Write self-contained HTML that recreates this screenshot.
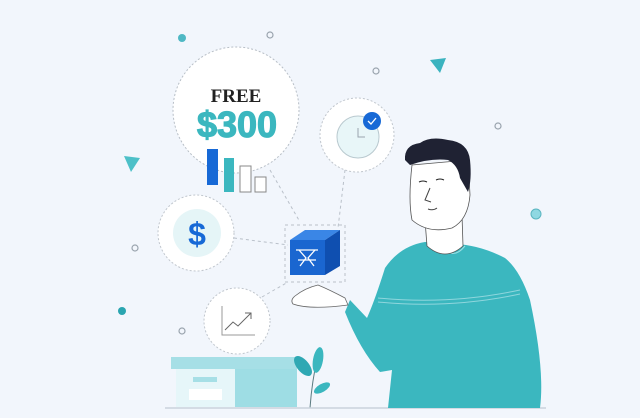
<!DOCTYPE html>
<html><head><meta charset="utf-8"><style>
html,body{margin:0;padding:0;background:#f2f6fc;}
svg{display:block}
</style></head><body>
<svg width="640" height="418" viewBox="0 0 640 418" xmlns="http://www.w3.org/2000/svg">
<rect width="640" height="418" fill="#f2f6fc"/>
<g stroke="#b9c0c9" stroke-width="1" stroke-dasharray="3 3" fill="none">
<path d="M270 170 L300 222"/>
<path d="M234 238 L288 245"/>
<path d="M345 170 L338 228"/>
<path d="M285 225 H345 V282 H285 Z"/>
<path d="M262 297 L288 282"/>
</g>
<g fill="none" stroke="#9aa4ae" stroke-width="1.2">
<circle cx="270" cy="35" r="3"/><circle cx="376" cy="71" r="3"/><circle cx="498" cy="126" r="3"/>
<circle cx="135" cy="248" r="3"/><circle cx="182" cy="331" r="3"/>
</g>
<circle cx="182" cy="38" r="4" fill="#4fb8c4"/>
<circle cx="536" cy="214" r="5" fill="#8fd8e2" stroke="#5ab5c0"/>
<circle cx="122" cy="311" r="4" fill="#2aa5b0"/>
<path d="M124 156 L140 158 L131 172 Z" fill="#4dc0c8"/>
<path d="M430 60 L446 58 L440 73 Z" fill="#3bb3bf"/>
<circle cx="236" cy="110" r="63" fill="#fff" stroke="#b7bec6" stroke-dasharray="2 2"/>
<text x="236" y="102" font-family="Liberation Serif,serif" font-weight="bold" font-size="19" fill="#222" text-anchor="middle">FREE</text>
<text x="237" y="137" font-family="Liberation Sans,sans-serif" font-weight="bold" font-size="36" fill="#3bb7bf" stroke="#3bb7bf" stroke-width="1.2" text-anchor="middle">$300</text>
<rect x="207" y="149" width="11" height="36" fill="#1769d6"/>
<rect x="224" y="158" width="10" height="34" fill="#3bb7bf"/>
<rect x="240" y="166" width="11" height="26" fill="#fff" stroke="#888"/>
<rect x="255" y="177" width="11" height="15" fill="#fff" stroke="#888"/>
<circle cx="357" cy="135" r="37" fill="#fff" stroke="#c0c6cd" stroke-dasharray="2 2"/>
<circle cx="358" cy="137" r="21" fill="#e8f6f8" stroke="#b9c9cf"/>
<path d="M358 128 V137 H365" stroke="#9aa4ae" fill="none"/>
<circle cx="372" cy="121" r="9" fill="#1769d6"/>
<path d="M368 121 L371 124 L376 118" stroke="#fff" stroke-width="1.3" fill="none"/>
<circle cx="196" cy="233" r="38" fill="#fff" stroke="#c0c6cd" stroke-dasharray="2 2"/>
<circle cx="197" cy="233" r="24" fill="#e5f5f7"/>
<text x="197" y="245" font-family="Liberation Sans,sans-serif" font-weight="bold" font-size="32" fill="#1769d6" text-anchor="middle">$</text>
<circle cx="237" cy="321" r="33" fill="#fff" stroke="#c0c6cd" stroke-dasharray="2 2"/>
<path d="M222 306 V335 H255" stroke="#999" fill="none"/>
<path d="M225 330 L233 322 L238 326 L251 313 M245 313 H251 V319" stroke="#666" fill="none"/>
<path d="M290 240 L305 230 L340 230 L325 240 Z" fill="#3a86e6"/>
<path d="M325 240 L340 230 L340 266 L325 275 Z" fill="#0f4fb0"/>
<rect x="290" y="240" width="35" height="35" fill="#1a66d0"/>
<path d="M296 250 H318 M299 250 L306 258 L300 266 M315 250 L308 258 L314 266 M298 260 H316" stroke="#fff" stroke-width="1.3" fill="none"/>
<rect x="171" y="357" width="126" height="12" fill="#a6dfe6"/>
<rect x="235" y="369" width="62" height="38" fill="#9edde4"/>
<rect x="176" y="369" width="59" height="38" fill="#e6f6f9"/>
<rect x="193" y="377" width="24" height="5" fill="#a6dfe6"/>
<rect x="189" y="389" width="33" height="11" fill="#fff"/>
<path d="M310 408 Q312 380 318 355" stroke="#5a7a80" fill="none"/>
<ellipse cx="303" cy="366" rx="6" ry="12" transform="rotate(-40 303 366)" fill="#2fa8b3"/>
<ellipse cx="318" cy="360" rx="5" ry="13" transform="rotate(10 318 360)" fill="#3bb7bf"/>
<ellipse cx="322" cy="388" rx="4" ry="9" transform="rotate(60 322 388)" fill="#3bb7bf"/>
<line x1="165" y1="408" x2="546" y2="408" stroke="#c9d2db" stroke-width="1.5"/>
<path d="M425 242 Q400 246 385 268 Q375 300 367 318 L350 300 L345 312 Q360 350 380 372 L392 370 L388 408 L540 408 Q545 370 530 300 Q520 270 505 258 Q480 245 455 244 Z" fill="#3bb7bf"/>
<path d="M440 244 Q452 262 465 246" stroke="#9adfe4" fill="none"/>
<path d="M378 298 Q450 305 520 290 M378 302 Q450 309 520 294" stroke="#8fd6dd" stroke-width="1" fill="none"/>
<path d="M425 220 L427 246 Q445 262 463 246 L462 215 Z" fill="#fff" stroke="#555" stroke-width="0.8"/>
<path d="M412 165 Q408 200 412 220 Q428 234 452 228 Q468 220 470 195 L468 160 Z" fill="#fff" stroke="#555" stroke-width="0.8"/>
<path d="M405 160 Q404 145 420 143 Q430 136 448 140 Q468 142 470 160 Q472 180 468 192 Q464 185 460 178 Q458 165 448 160 Q430 158 410 165 Z" fill="#1f2233"/>
<path d="M419 182 Q423 180 427 182 M436 180 Q440 178 444 180" stroke="#222" fill="none"/>
<path d="M430 188 L425 200 L431 202 M428 209 Q433 211 437 208" stroke="#444" fill="none"/>
<path d="M345 298 Q330 290 318 285 Q305 288 295 296 Q290 300 293 304 Q310 310 348 305 Z" fill="#fff" stroke="#666" stroke-width="0.8"/>
</svg>
</body></html>
